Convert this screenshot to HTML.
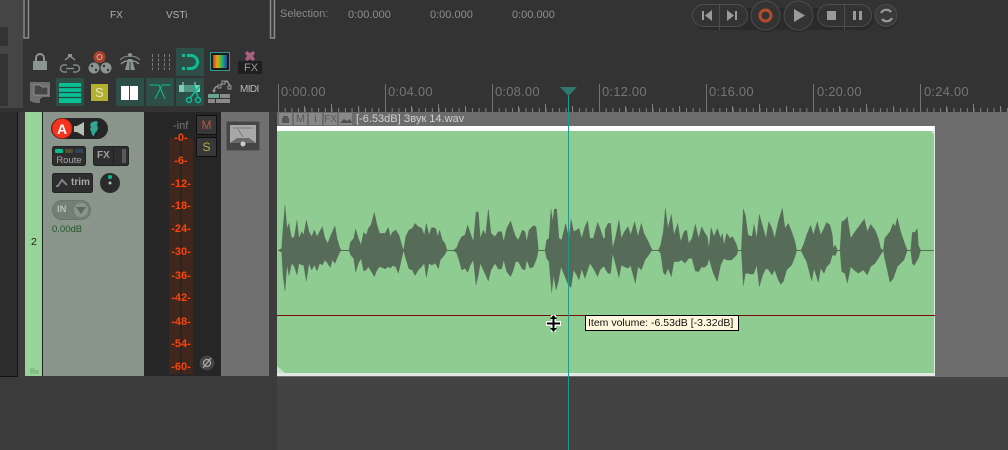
<!DOCTYPE html>
<html><head><meta charset="utf-8"><style>
html,body{margin:0;padding:0;background:#333}
#r{position:relative;width:1008px;height:450px;overflow:hidden;background:#333;font-family:"Liberation Sans",sans-serif}
#r div{position:absolute;box-sizing:border-box}
.t{white-space:nowrap;line-height:1}
.m{color:#ff4406;font-weight:bold;font-size:11px;left:169px;width:24px;text-align:center;white-space:nowrap;line-height:11px}
.l{color:#757575;font-size:13px;top:85px;white-space:nowrap;line-height:13px;letter-spacing:.2px}
.b{top:113px;width:13px;height:12px;background:#888;color:#5a5a5a;font-size:11px;line-height:13px;text-align:center}
svg{position:absolute;left:0;top:0}
</style></head><body><div id="r">
<div style="left:0;top:0;width:23px;height:108px;background:#454545"></div>
<div style="left:0;top:27px;width:8px;height:19px;background:#333"></div>
<div style="left:0;top:54px;width:8px;height:52px;background:#333"></div>
<div style="left:0;top:108px;width:277px;height:4px;background:#333"></div>
<div style="left:0;top:112px;width:18px;height:265px;background:#2d2d2d;border-right:1px solid #111;border-bottom:1px solid #111"></div>
<div style="left:18px;top:112px;width:259px;height:265px;background:#3c3c3c"></div>
<div style="left:0;top:377px;width:277px;height:73px;background:#3b3b3b"></div>
<div style="left:277px;top:377px;width:731px;height:73px;background:#434343"></div>
<div style="left:25px;top:112px;width:17px;height:264px;background:#98d39a"></div>
<div style="left:42px;top:112px;width:1px;height:264px;background:#222"></div>
<div style="left:43px;top:112px;width:101px;height:264px;background:#8a968b"></div>
<div style="left:144px;top:112px;width:77px;height:264px;background:#262626"></div>
<div style="left:221px;top:112px;width:48px;height:264px;background:#707070"></div>
<div style="left:277px;top:112px;width:731px;height:265px;background:#6c6c6c"></div>
<div style="left:277px;top:126px;width:658px;height:250px;background:#e4e8e4"></div>
<div style="left:277px;top:131px;width:657px;height:242px;background:#8fcc92"></div>
<div style="left:277px;top:126px;width:657px;height:5px;background:#fff"></div>

<svg width="1008" height="450" viewBox="0 0 1008 450">
<defs>
<pattern id="tk" x="278" y="0" width="6.6875" height="112" patternUnits="userSpaceOnUse"><rect x="0" y="108" width="1" height="4" fill="#808080"/></pattern>
</defs>
<rect x="278" y="104" width="730" height="8" fill="url(#tk)"/>
<path d="M278.500 84V112M385.500 84V112M492.500 84V112M599.500 84V112M706.500 84V112M813.500 84V112M920.500 84V112" stroke="#737373" fill="none"/>
<path d="M331.500 104V112M438.500 104V112M545.500 104V112M652.500 104V112M759.500 104V112M866.500 104V112M973.500 104V112" stroke="#808080" fill="none"/>
<path d="M304.500 106V112M358.500 106V112M411.500 106V112M465.500 106V112M518.500 106V112M572.500 106V112M625.500 106V112M679.500 106V112M732.500 106V112M786.500 106V112M839.500 106V112M893.500 106V112M946.500 106V112M1000.500 106V112" stroke="#808080" fill="none"/>
<!-- waveform -->
<g transform="translate(275,195) scale(.33333)" fill="#566b58" stroke="#566b58" stroke-width="1">
<polygon points="10,166 20,160 24,100 30,30 36,100 42,85 50,130 58,125 66,75 72,130 80,110 86,120 94,75 102,110 110,125 118,105 126,125 134,110 142,95 150,130 158,145 170,115 180,93 186,130 195,160 200,166 222,166 226,142 236,130 242,102 250,130 258,150 266,112 274,120 280,100 288,90 298,52 306,90 314,115 322,115 330,115 340,97 346,125 352,112 362,105 372,120 380,150 386,166 392,125 402,105 412,100 420,85 430,95 440,100 448,120 454,85 462,120 470,97 482,100 488,125 494,105 502,135 510,145 516,166 535,166 545,158 552,140 560,125 570,120 578,90 586,115 595,140 603,52 610,50 616,130 625,105 632,120 640,42 648,115 660,125 670,110 680,110 686,140 695,100 707,78 715,105 722,125 730,135 742,105 750,110 755,140 762,105 775,92 783,95 788,140 790,166 810,166 815,135 822,130 828,42 833,80 838,42 845,42 852,130 860,135 872,85 882,130 888,72 896,110 905,105 912,100 920,130 930,95 938,78 945,130 955,130 968,82 975,100 985,130 990,130 990,215 985,215 975,225 968,245 955,220 945,205 938,225 930,250 920,222 912,255 905,240 896,225 888,278 880,270 868,240 858,215 850,260 843,285 836,240 830,293 822,200 815,190 810,166 790,166 785,190 775,215 765,220 755,195 750,225 742,222 730,200 722,200 715,225 707,245 695,230 686,195 680,222 670,222 660,205 648,225 640,258 632,240 625,225 616,205 610,240 603,270 595,195 586,210 578,232 570,220 560,225 552,195 545,174 535,166 516,166 510,178 496,195 490,222 482,205 470,210 462,205 454,248 448,205 440,215 430,225 420,242 412,225 402,222 392,190 386,166 380,190 370,235 362,215 352,212 346,220 340,215 330,222 322,218 314,215 306,225 298,245 288,228 280,215 274,225 266,228 258,190 250,205 242,232 236,190 228,182 222,166 200,166 195,170 186,190 180,205 172,195 166,218 158,205 150,195 142,210 134,205 126,228 118,210 110,225 102,205 94,258 86,210 80,210 72,205 66,240 58,215 50,205 42,242 36,210 30,288 24,240 20,172"/>
</g>
<g transform="translate(600,195) scale(.33333)" fill="#566b58" stroke="#566b58" stroke-width="1">
<polygon points="15,105 24,85 32,85 38,160 46,130 57,75 64,130 72,112 84,95 92,120 104,80 114,125 124,85 132,115 145,140 155,162 158,166 175,166 182,150 190,110 196,40 204,100 214,58 222,120 233,85 242,140 252,110 260,105 266,145 276,130 286,88 296,130 305,95 312,110 322,125 327,160 333,98 342,125 352,100 362,130 367,115 372,150 380,115 390,130 398,125 410,150 414,166 424,166 430,42 436,60 444,120 456,125 462,88 470,130 478,58 488,95 498,130 506,80 516,100 524,130 535,80 547,40 555,100 565,85 575,110 585,140 590,166 603,166 612,145 620,120 632,90 640,120 652,80 662,120 672,100 680,82 690,90 697,120 700,160 706,150 712,166 720,166 725,80 735,75 742,65 752,130 765,110 780,90 793,72 802,110 812,88 825,105 835,130 842,160 850,166 854,130 870,110 880,85 886,95 892,68 902,110 912,140 922,166 932,166 937,112 945,112 952,100 955,150 962,166 962,166 955,190 952,195 942,212 937,205 932,166 922,166 912,195 902,205 892,215 880,250 870,262 862,225 854,190 850,166 835,190 825,205 812,215 802,240 790,225 775,235 762,225 752,215 742,265 735,235 725,230 720,166 712,166 706,182 697,180 690,205 680,215 672,235 662,220 655,262 642,220 635,258 620,200 612,185 603,166 590,166 585,185 575,210 560,225 550,260 542,268 535,255 524,225 516,240 506,225 498,220 488,240 478,275 470,210 462,235 456,238 444,235 436,235 430,272 424,166 414,166 410,180 395,195 380,195 372,190 362,210 352,260 340,235 327,190 322,210 312,218 305,215 296,230 286,228 276,190 266,190 255,205 245,195 235,200 222,200 214,245 204,220 196,240 190,232 182,175 175,166 155,166 150,175 135,195 124,225 114,215 106,265 92,212 84,220 72,215 64,210 57,248 46,205 38,175 32,235 24,235 15,220"/>
</g>
<path d="M278 250.500H934" stroke="#566b58" fill="none"/>
<path d="M277 315.500H935" stroke="#7a0c0c" fill="none"/>
<path d="M277 373V366L285 373Z" fill="#c6e3c7"/>
<path d="M934 131h-3l3 4z" fill="#c6e3c7"/>
<path d="M568.500 92V450" stroke="#1c9a8c" fill="none"/>
<path d="M560 87H577L568.500 96Z" fill="#2c7a6c"/>
<!-- grips -->
<path d="M24 -2H28.500V38H24Z" fill="#3a3a3a" stroke="#8a8a8a" stroke-width="1.500"/>
<path d="M270.500 -2H274.500V38H270.500Z" fill="#3a3a3a" stroke="#8a8a8a" stroke-width="1.500"/>
<!-- lock -->
<path d="M33 61h14v9h-14z" fill="#8a9492"/><path d="M36 61v-3a4 4 0 0 1 8 0v3" fill="none" stroke="#8a9492" stroke-width="2"/>
<!-- link -->
<g fill="none" stroke="#7f8a88" stroke-width="1.500"><path d="M67 65h-3a3.500 3.500 0 0 0 0 7h3M73 65h3a3.500 3.500 0 0 1 0 7h-3M66 68.500h8"/><path d="M65 60l5-4 5 4"/></g>
<rect x="68" y="54" width="4" height="3" fill="#8a9492"/>
<!-- reels -->
<circle cx="99.500" cy="57" r="6" fill="#a3422f"/><circle cx="99.500" cy="57" r="2.500" fill="none" stroke="#e2a8a0"/>
<circle cx="94" cy="68" r="5.500" fill="#8a9492"/><circle cx="106" cy="68" r="5.500" fill="#8a9492"/>
<circle cx="92" cy="66" r="1.200" fill="#333"/><circle cx="96" cy="70" r="1.200" fill="#333"/><circle cx="104" cy="66" r="1.200" fill="#333"/><circle cx="108" cy="70" r="1.200" fill="#333"/>
<!-- road -->
<path d="M121 64a11 8 0 0 1 18 0" fill="none" stroke="#8a9492" stroke-width="1.500"/><path d="M120 60a12 9 0 0 1 20 0" fill="none" stroke="#8a9492"/>
<path d="M125 70l3-11h4l3 11z" fill="#8a9492"/><path d="M130 62v8" stroke="#333"/><circle cx="130" cy="55" r="2" fill="#8a9492"/>
<!-- grid -->
<path d="M152.500 54V70M158.500 54V70M164.500 54V70M169.500 54V70" stroke="#7b7b7b" stroke-dasharray="3 1.500"/>
<!-- magnet box -->
<rect x="176" y="48" width="28" height="28" fill="#2d4f48"/>
<path d="M187 55.500h4a6.500 6.500 0 0 1 0 13h-4" fill="none" stroke="#0abf94" stroke-width="3"/><path d="M182 54h3v3h-3zM182 67h3v3h-3z" fill="#0abf94"/>
<!-- color -->
<rect x="210.500" y="52.500" width="19" height="18" fill="#1b1b1b" stroke="#2f9b88"/>
<defs><linearGradient id="rb" x1="0" x2="1" y1="0" y2="0"><stop offset="0" stop-color="#d53c1d"/><stop offset=".3" stop-color="#e6a41b"/><stop offset=".5" stop-color="#6cbe24"/><stop offset=".72" stop-color="#14a089"/><stop offset="1" stop-color="#2f3f99"/></linearGradient></defs>
<rect x="213" y="55" width="14" height="13" fill="url(#rb)"/>
<!-- FX x -->
<path d="M247 51l3 2 3-2 2 2-2 3 2 3-2 2-3-2-3 2-2-2 2-3-2-3z" fill="#a86080"/>
<rect x="238" y="61" width="24" height="13" fill="#1f1f1f"/>
<!-- folder -->
<path d="M30 82h20v15h-7l-3 2v4h-5l-5-2z" fill="#6f6f6f"/><path d="M34 95V85h6l2 2h6v8z" fill="#454545" stroke="#999" stroke-width=".8"/>
<!-- list -->
<rect x="56" y="78" width="28" height="28" fill="#2d4f48"/><rect x="59" y="83" width="22" height="20" fill="#0abf94"/>
<path d="M59 87.500H81M59 92.500H81M59 97.500H81" stroke="#1c4a42" stroke-width="1.200"/>
<!-- S -->
<rect x="91" y="84" width="17" height="17" fill="#b2b02c"/>
<!-- columns -->
<rect x="116" y="78" width="28" height="28" fill="#2d4f48"/><rect x="121" y="86" width="8" height="14" fill="#fff"/><rect x="130" y="86" width="8" height="14" fill="#fff"/>
<!-- crossfade -->
<rect x="146" y="78" width="28" height="28" fill="#2d4f48"/><path d="M149 85h10l6 14M171 85h-9l-7 14" fill="none" stroke="#0abf94" stroke-width="1"/>
<!-- scissors -->
<rect x="176" y="78" width="28" height="28" fill="#2d4f48"/><rect x="179" y="85" width="21" height="7" fill="#7fcdb8"/><rect x="184" y="85" width="11" height="7" fill="#4f9687"/>
<path d="M183 82v3M195 82v3" stroke="#a9dccf"/><path d="M200 86l-10 12M194 85l4 12" stroke="#0abf94" stroke-width="1.500"/><circle cx="189" cy="100" r="2.500" fill="none" stroke="#0abf94" stroke-width="1.500"/><circle cx="198" cy="100" r="2.500" fill="none" stroke="#0abf94" stroke-width="1.500"/>
<!-- env -->
<path d="M214 92a5 5 0 0 1 5-6l4-3 4-2 4 6" fill="none" stroke="#999" stroke-width="1.300"/><rect x="222" y="81" width="3" height="3" fill="#333" stroke="#999"/><rect x="218" y="85" width="3" height="3" fill="#333" stroke="#999"/><rect x="228" y="86" width="3" height="3" fill="#333" stroke="#999"/><path d="M212 90l2 3 2-3z" fill="#999"/>
<rect x="208" y="94" width="11" height="4" fill="#6aa392"/><rect x="220" y="94" width="10" height="4" fill="#8a8a8a"/><rect x="208" y="99" width="7" height="4" fill="#8a8a8a"/><rect x="216" y="99" width="14" height="4" fill="#8a8a8a"/>
<!-- transport -->
<rect x="694" y="8" width="180" height="22" rx="11" fill="#2a2a2a"/>
<circle cx="765.500" cy="17" r="15" fill="#292929"/><circle cx="798.500" cy="17" r="15" fill="#292929"/><circle cx="886" cy="17" r="12" fill="#2a2a2a"/>
<g fill="#333" stroke="#4d4d4d" stroke-width="1">
<rect x="692.500" y="4.500" width="55" height="22" rx="11"/>
<rect x="817.500" y="4.500" width="54" height="22" rx="11"/>
<circle cx="765.500" cy="15.500" r="14.500"/>
<circle cx="798.500" cy="15.500" r="14.500"/>
<circle cx="886" cy="15.500" r="11" fill="#3a3a3a"/>
</g>
<path d="M719.500 5V30M844.500 5V30" stroke="#4d4d4d"/>
<rect x="702" y="11" width="2" height="9" fill="#9a9a9a"/><path d="M712 10v11l-7-5.500z" fill="#9a9a9a"/>
<rect x="735" y="11" width="2" height="9" fill="#9a9a9a"/><path d="M727 10v11l7-5.500z" fill="#9a9a9a"/>
<circle cx="765.500" cy="15.500" r="5.500" fill="none" stroke="#b84a2c" stroke-width="3"/>
<path d="M794 9l11 6.500-11 6.500z" fill="#9a9a9a"/>
<rect x="827" y="11" width="9" height="9" fill="#9a9a9a"/>
<rect x="853" y="11" width="3" height="9" fill="#9a9a9a"/><rect x="859" y="11" width="3" height="9" fill="#9a9a9a"/>
<path d="M881 13a6 6 0 0 1 10-1M892 18a6 6 0 0 1-10 1" fill="none" stroke="#9a9a9a" stroke-width="2.200"/>
<!-- arm pill -->
<rect x="51" y="118" width="57" height="21" rx="10.500" fill="#262626"/>
<circle cx="62" cy="128.500" r="10" fill="#f5331f" stroke="#a82014" stroke-width=".8"/>
<path d="M74 126h3l7-4v14l-7-4h-3z" fill="#b4bcb4"/>
<path d="M92 122l4-1 2 1-1 3 1 3-1 3-2 2-1 3-2-1-1-4-1-2 1-2-1-2 1-2z" fill="#2aa594"/>
<path d="M92 125h1M95 124h1M91 129h1M94 128h1M93 132h1" stroke="#8a968b"/>
<!-- route -->
<rect x="52.500" y="146.500" width="33" height="19" rx="2" fill="#2e2e2e" stroke="#222"/>
<rect x="55" y="149" width="8" height="4" rx="1" fill="#0abf94"/><rect x="65" y="149" width="8" height="4" rx="1" fill="#55502f"/><rect x="75" y="149" width="8" height="4" rx="1" fill="#2d4759"/>
<rect x="93.500" y="146.500" width="35" height="19" rx="2" fill="#2e2e2e" stroke="#222"/><path d="M113.500 147V165" stroke="#222"/><rect x="122" y="149" width="4" height="14" rx="1" fill="#5a5a5a"/>
<rect x="52.500" y="173.500" width="40" height="19" rx="2" fill="#2e2e2e" stroke="#222"/>
<path d="M56 186l2 0 4-6 5 5" fill="none" stroke="#808080" stroke-width="2"/>
<circle cx="110" cy="183" r="10" fill="#2b2b2b"/><circle cx="110" cy="177" r="2" fill="#0abf94"/><circle cx="110" cy="183" r="1.500" fill="#bbb"/>
<rect x="52.500" y="200.500" width="38" height="19" rx="9.500" fill="#737f74" stroke="#6a756b"/>
<circle cx="81" cy="210" r="7" fill="#8a968b"/><path d="M76 207h10l-5 7z" fill="#5d685e"/>
<!-- M S -->
<rect x="196.500" y="115.500" width="20" height="19" fill="#383838" stroke="#0f0f0f"/>
<rect x="196.500" y="137.500" width="20" height="19" fill="#383838" stroke="#0f0f0f"/>
<!-- VU -->
<rect x="226.500" y="121.500" width="33" height="29" rx="1" fill="#454545" stroke="#5c5c5c"/>
<rect x="230" y="125" width="26" height="18" fill="#a8a8a8"/>
<path d="M233 128h20M243 137L238 129" stroke="#7a7a7a" fill="none"/><path d="M230 143l7-5h12l7 5z" fill="#6a6a6a"/><circle cx="243" cy="144" r="2.500" fill="#ccc"/>
<!-- meter -->
<rect x="169" y="138" width="24" height="236" fill="#40261c"/><rect x="180" y="138" width="2" height="236" fill="#2a2523"/>
<circle cx="207" cy="363" r="8" fill="#444" stroke="#222"/><circle cx="207" cy="363" r="3.500" fill="none" stroke="#aaa" stroke-width="1.200"/><path d="M203 368l8-10" stroke="#aaa" stroke-width="1.200"/>
<path d="M30 374v-6h4l1 2h4v4z" fill="#84bd86"/>
<!-- cursor -->
<path d="M546 323.500H561M553.500 315V332" stroke="#fff" stroke-width="5" fill="none"/>
<path d="M547 323.500H560M553.500 317V330" stroke="#000" stroke-width="2" fill="none"/>
<path d="M550 319h7l-3.500-4zM550 328h7l-3.500 4z" fill="#000"/>
</svg>

<div class="t" style="left:110px;top:11px;font-size:10px;color:#b0b0b0">FX</div>
<div class="t" style="left:166px;top:11px;font-size:10px;color:#b0b0b0">VSTi</div>
<div class="t" style="left:280px;top:9px;font-size:11px;color:#8a8a8a">Selection:</div>
<div class="t" style="left:348px;top:10px;font-size:11px;color:#8f8f8f">0:00.000</div>
<div class="t" style="left:430px;top:10px;font-size:11px;color:#8f8f8f">0:00.000</div>
<div class="t" style="left:512px;top:10px;font-size:11px;color:#8f8f8f">0:00.000</div>
<div class="t" style="left:244px;top:63px;font-size:11px;color:#999">FX</div>
<div class="t" style="left:240px;top:85px;font-size:10px;letter-spacing:-.6px;color:#bbb">MIDI</div>
<div class="t" style="left:95px;top:86px;font-size:13px;color:#e4e4d0">S</div>

<div class="l" style="left:281px">0:00.00</div>
<div class="l" style="left:388px">0:04.00</div>
<div class="l" style="left:495px">0:08.00</div>
<div class="l" style="left:602px">0:12.00</div>
<div class="l" style="left:709px">0:16.00</div>
<div class="l" style="left:817px">0:20.00</div>
<div class="l" style="left:924px">0:24.00</div>

<div class="b" style="left:279px"></div>
<div class="b" style="left:294px">M</div>
<div class="b" style="left:309px">i</div>
<div class="b" style="left:324px;font-size:10px">FX</div>
<div class="b" style="left:339px"></div>
<svg width="1008" height="450"><path d="M283 116h5v2h1v5h-7v-5h1z" fill="#555"/><path d="M340 123l4-4 3 2 3-2 2 4z" fill="#4f4f4f"/></svg>
<div class="t" style="left:356px;top:114px;font-size:11px;color:#cfcfcf;font-family:'Liberation Sans','DejaVu Sans',sans-serif">[-6.53dB] Звук 14.wav</div>

<div class="t" style="left:55px;top:122px;width:14px;text-align:center;color:#fff;font-weight:bold;font-size:14px">A</div>
<div class="t" style="left:53px;top:156px;width:32px;text-align:center;font-size:9.500px;color:#a8a8a8">Route</div>
<div class="t" style="left:97px;top:151px;font-size:10px;font-weight:bold;color:#a0a0a0">FX</div>
<div class="t" style="left:71px;top:178px;font-size:10px;font-weight:bold;color:#a8a8a8">trim</div>
<div class="t" style="left:57px;top:205px;font-size:9.500px;font-weight:bold;color:#b8c0b8">IN</div>
<div class="t" style="left:52px;top:225px;font-size:9.500px;color:#23562a">0.00dB</div>
<div class="t" style="left:31px;top:237px;font-size:10.500px;color:#222">2</div>

<div class="t" style="left:173px;top:121px;font-size:11px;color:#777">-inf</div>
<div class="m" style="top:133px">-0-</div>
<div class="m" style="top:156px">-6-</div>
<div class="m" style="top:179px">-12-</div>
<div class="m" style="top:201px">-18-</div>
<div class="m" style="top:224px">-24-</div>
<div class="m" style="top:247px">-30-</div>
<div class="m" style="top:271px">-36-</div>
<div class="m" style="top:293px">-42-</div>
<div class="m" style="top:317px">-48-</div>
<div class="m" style="top:339px">-54-</div>
<div class="m" style="top:362px">-60-</div>
<div class="t" style="left:196px;top:119px;width:21px;text-align:center;font-size:12px;color:#b5584a">M</div>
<div class="t" style="left:196px;top:141px;width:21px;text-align:center;font-size:12px;color:#b5b040">S</div>

<div style="left:585px;top:315px;width:154px;height:16px;background:#fff8dc;border:1px solid #000"></div>
<div class="t" style="left:588px;top:318px;font-size:10.500px;color:#111">Item volume: -6.53dB [-3.32dB]</div>
</div></body></html>
